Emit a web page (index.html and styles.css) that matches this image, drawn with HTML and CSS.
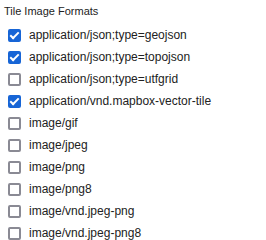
FILE: index.html
```html
<!DOCTYPE html>
<html lang="en">
<head>
    <meta charset="UTF-8">
    <title>Tile Image Formats</title>
    <link rel="stylesheet" href="styles.css">
</head>
<body>
    <div class="formats">
        <div class="formats-title">Tile Image Formats</div>
        <label class="format"><span class="box checked"></span>application/json;type=geojson</label>
        <label class="format"><span class="box checked"></span>application/json;type=topojson</label>
        <label class="format"><span class="box"></span>application/json;type=utfgrid</label>
        <label class="format"><span class="box checked"></span>application/vnd.mapbox-vector-tile</label>
        <label class="format"><span class="box"></span>image/gif</label>
        <label class="format"><span class="box"></span>image/jpeg</label>
        <label class="format"><span class="box"></span>image/png</label>
        <label class="format"><span class="box"></span>image/png8</label>
        <label class="format"><span class="box"></span>image/vnd.jpeg-png</label>
        <label class="format"><span class="box"></span>image/vnd.jpeg-png8</label>
    </div>
</body>
</html>
```

FILE: styles.css
```css
body {
    margin: 0;
    background-color: #ffffff;
    font-family: "Liberation Sans", Arial, sans-serif;
    color: #222222;
}
.formats {
    display: flex;
    flex-direction: column;
    padding: 4px 0 0 4px;
}
.formats-title {
    font-size: 11px;
    line-height: 14px;
    margin-bottom: 6px;
}
.format {
    display: flex;
    align-items: center;
    height: 22px;
    padding-left: 4px;
    font-size: 12px;
    gap: 8px;
}
.box {
    width: 13px;
    height: 13px;
    box-sizing: border-box;
    border: 2px solid #8a8a94;
    border-radius: 2px;
    position: relative;
}
.box.checked {
    background-color: #1765d6;
    border-color: #1765d6;
}
.box.checked::after {
    content: "";
    position: absolute;
    left: 2px;
    top: -1px;
    width: 3px;
    height: 7px;
    border: solid #ffffff;
    border-width: 0 2px 2px 0;
    transform: rotate(45deg);
}
```
